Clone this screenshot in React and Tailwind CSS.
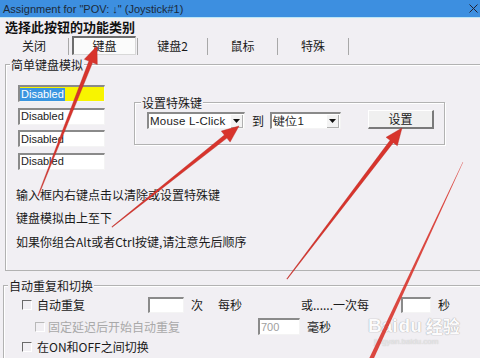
import React from "react";

const CJK = "font-['Noto_Sans_CJK_SC','Noto_Sans',sans-serif]";

function arrowPoints(tx, ty, px, py, wt, wh, L, hw) {
  const dx = px - tx, dy = py - ty;
  const len = Math.hypot(dx, dy);
  const ux = dx / len, uy = dy / len;
  const nx = -uy, ny = ux;
  const bx = px - ux * L, by = py - uy * L;
  const pts = [
    [tx + nx * wt / 2, ty + ny * wt / 2],
    [bx + nx * wh / 2, by + ny * wh / 2],
    [bx + nx * hw, by + ny * hw],
    [px, py],
    [bx - nx * hw, by - ny * hw],
    [bx - nx * wh / 2, by - ny * wh / 2],
    [tx - nx * wt / 2, ty - ny * wt / 2],
  ];
  return pts.map((p) => p[0].toFixed(1) + "," + p[1].toFixed(1)).join(" ");
}

function Sunken({ className = "", children }) {
  return (
    <div
      className={
        "border-t-2 border-l-2 border-b border-r border-t-[#8a8a8a] border-l-[#8a8a8a] border-b-[#f4f4f4] border-r-[#f4f4f4] shrink-0 " +
        className
      }
    >
      {children}
    </div>
  );
}

function Check({ disabled }) {
  return (
    <div
      className={
        "w-[10px] h-[10px] shrink-0 border-t border-l border-b border-r border-b-white border-r-white " +
        (disabled ? "border-t-[#b8b8b8] border-l-[#b8b8b8]" : "border-t-[#6a6a6a] border-l-[#6a6a6a]")
      }
    />
  );
}

function Combo({ w, text }) {
  return (
    <Sunken className={"h-[17px] bg-white flex items-center justify-between " + w}>
      <span className="font-['Liberation_Sans',sans-serif] text-[11.5px] leading-[13px] pl-[1px] text-[#222] tracking-[0.2px]">
        {text}
      </span>
      <div className="w-[12px] h-[13px] mr-[1px] bg-[#f3f3f3] flex items-center justify-center border-r border-b border-[#b0b0b0]">
        <svg width="7" height="4" viewBox="0 0 7 4">
          <path d="M0 0 L7 0 L3.5 4 Z" fill="#111" />
        </svg>
      </div>
    </Sunken>
  );
}

export default function App() {
  const arrows = [
    [38, 196, 97, 46],
    [112, 227, 239, 126],
    [287, 279, 402, 128],
  ];
  return (
    <div className={"w-[480px] h-[358px] relative overflow-hidden bg-[#f1eff3] text-[#1a1a1a] " + CJK}>
      {/* title bar */}
      <div className="h-[18px] bg-[#3d8fe0] border-b border-[#bde6f6] flex items-center justify-between pl-[3px] pr-[2px]">
        <span className="font-['Liberation_Sans',sans-serif] text-[11px] leading-[12px] text-[#1c2a3a]">
          Assignment for "POV: ↓" (Joystick#1)
        </span>
        <svg width="9" height="9" viewBox="0 0 9 9">
          <path d="M0.5 0.5 L8.5 8.5 M8.5 0.5 L0.5 8.5" stroke="#223" strokeWidth="1" />
        </svg>
      </div>

      {/* heading */}
      <div className="pl-[5px] mt-[1px] h-[16px] text-[13px] leading-[16px] font-bold text-[#111]">选择此按钮的功能类别</div>

      {/* tabs */}
      <div className="flex items-center h-[20px] mt-[1px] text-[12px]">
        <div className="w-[68px] h-[20px] flex items-center justify-center">关闭</div>
        <div className="w-px h-[17px] bg-[#a8a8a8]" />
        <div className="w-[68px] h-[20px] flex justify-center">
          <div className="w-[64px] h-[19px] ml-[2px] border-t-2 border-l-2 border-t-[#6d6d6d] border-l-[#6d6d6d] border-b border-r border-b-[#d8d8d8] border-r-[#d8d8d8] bg-[#fbfbfb] flex items-center justify-center">
            键盘
          </div>
        </div>
        <div className="w-px h-[17px] bg-[#a8a8a8]" />
        <div className="w-[69px] h-[20px] flex items-center justify-center">键盘2</div>
        <div className="w-px h-[17px] bg-[#a8a8a8]" />
        <div className="w-[69px] h-[20px] flex items-center justify-center">鼠标</div>
        <div className="w-px h-[17px] bg-[#a8a8a8]" />
        <div className="w-[70px] h-[20px] flex items-center justify-center">特殊</div>
        <div className="w-px h-[17px] bg-[#a8a8a8]" />
      </div>

      {/* group 1 */}
      <div className="ml-[5px] mt-[8px] w-[490px] h-[207px] border-t border-l border-b border-[#b2b2b2] shadow-[inset_1px_1px_0_#ffffff]">
        <div className="-mt-[8px] ml-[4px] w-fit px-[1px] bg-[#f1eff3] text-[12px] leading-[15px]">简单键盘模拟</div>
        <div className="flex mt-[13px]">
          <div className="ml-[12px] w-[87px] flex flex-col gap-[5.5px]">
            <Sunken className="h-[17px] bg-[#f8f400] flex items-center">
              <span className="bg-[#3a95e0] text-white font-['Liberation_Sans',sans-serif] text-[11px] leading-[13px] px-[1px]">
                Disabled
              </span>
            </Sunken>
            {[0, 1, 2].map((i) => (
              <Sunken key={i} className="h-[17px] bg-white flex items-center">
                <span className="font-['Liberation_Sans',sans-serif] text-[11px] leading-[13px] pl-[1px] text-[#222]">
                  Disabled
                </span>
              </Sunken>
            ))}
          </div>
          {/* special key group */}
          <div className="ml-[29px] mt-[17px] w-[311px] h-[43px] border border-[#b2b2b2] shadow-[inset_1px_1px_0_#ffffff,1px_1px_0_#ffffff]">
            <div className="-mt-[8px] ml-[6px] w-fit px-[1px] bg-[#f1eff3] text-[12px] leading-[15px]">设置特殊键</div>
            <div className="flex items-center mt-[2px] ml-[12px]">
              <Combo w="w-[98px]" text="Mouse L-Click" />
              <span className="ml-[7px] w-[18px] text-[12px] leading-[14px]">到</span>
              <Combo w="w-[71px]" text="键位1" />
              <div className="ml-[27px] w-[66px] h-[19px] -mt-[2px] border-t border-l border-t-white border-l-white border-b-2 border-r-2 border-b-[#7a7a7a] border-r-[#7a7a7a] bg-[#f0f0f0] flex items-center justify-center text-[12px]">
                设置
              </div>
            </div>
          </div>
        </div>
        <div className="ml-[10px] mt-[13px] text-[12px] leading-[23.5px] text-[#1a1a1a]">
          <div>输入框内右键点击以清除或设置特殊键</div>
          <div>键盘模拟由上至下</div>
          <div>如果你组合Alt或者Ctrl按键,请注意先后顺序</div>
        </div>
      </div>

      {/* group 2 */}
      <div className="ml-[3px] mt-[14px] w-[490px] h-[80px] border-t border-l border-[#b2b2b2] shadow-[inset_1px_1px_0_#ffffff]">
        <div className="-mt-[8px] ml-[4px] w-fit px-[1px] bg-[#f1eff3] text-[12px] leading-[15px]">自动重复和切换</div>
        <div className="flex items-center h-[17px] mt-[3px] text-[12px]">
          <div className="w-[18px] shrink-0" />
          <Check />
          <span className="ml-[5px] w-[111px] shrink-0">自动重复</span>
          <Sunken className="w-[36px] h-[16px] bg-white" />
          <span className="ml-[7px] w-[27px] shrink-0">次</span>
          <span className="w-[83px] shrink-0">每秒</span>
          <span className="w-[100px] shrink-0">或......一次每</span>
          <Sunken className="w-[30px] h-[16px] bg-white" />
          <span className="ml-[7px] leading-[14px]">秒</span>
        </div>
        <div className="flex items-center h-[17px] mt-[5px] text-[12px]">
          <div className="w-[31px] shrink-0" />
          <Check disabled />
          <span className="ml-[3px] w-[210px] shrink-0 text-[#a9a9a9]">固定延迟后开始自动重复</span>
          <Sunken className="w-[42px] h-[17px] bg-white flex items-center">
            <span className="font-['Liberation_Sans',sans-serif] text-[11px] leading-[13px] pl-[1px] text-[#a0a0a0]">700</span>
          </Sunken>
          <span className="ml-[7px]">毫秒</span>
        </div>
        <div className="flex items-center h-[17px] mt-[3px] text-[12px]">
          <div className="w-[18px] shrink-0" />
          <Check />
          <span className="ml-[5px]">在ON和OFF之间切换</span>
        </div>
      </div>

      {/* watermark */}
      <div className="absolute left-[368px] top-[317px] pointer-events-none opacity-80">
        <div className="flex items-end font-['Liberation_Sans',sans-serif] text-[19px] leading-[17px] font-bold text-white [text-shadow:0_0_1px_#9a9a9a,0_0_1px_#9a9a9a]">
          <span>Bai</span>
          <span className="ml-[1px]">du</span>
          <span className={"ml-[4px] text-[17px] leading-[17px] " + CJK}>经验</span>
        </div>
        <div className="font-['Liberation_Sans',sans-serif] text-[8px] leading-[10px] text-[#e6e6e6] [text-shadow:0_0_1px_#aaa] ml-[6px] mt-[3px]">
          jingyan.baidu.com
        </div>
      </div>

      {/* arrows overlay */}
      <svg className="absolute left-0 top-0 pointer-events-none" width="480" height="358" viewBox="0 0 480 358">
        {arrows.map((a, i) => (
          <polygon
            key={i}
            points={arrowPoints(a[0], a[1], a[2], a[3], 0.6, 4, 17, 7)}
            fill="#d8342c"
            stroke="#b52620"
            strokeWidth="0.4"
          />
        ))}
        <polygon points={arrowPoints(463, 162, 368, 366, 0.4, 4.5, 0.01, 2.25)} fill="#d8342c" opacity="0.9" />
      </svg>
    </div>
  );
}
